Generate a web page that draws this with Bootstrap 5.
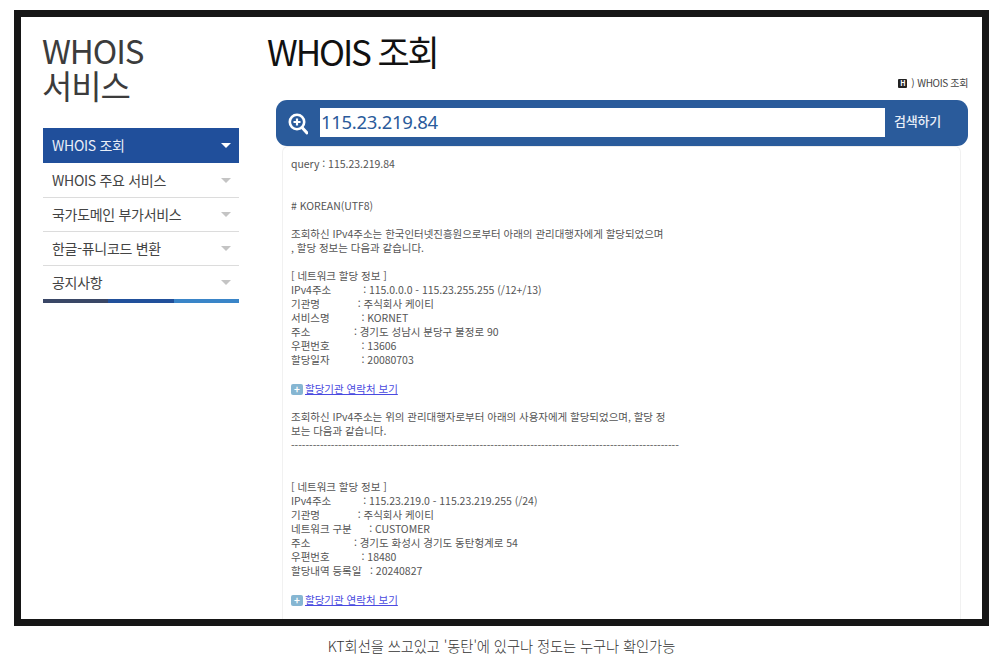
<!DOCTYPE html>
<html lang="ko">
<head>
<meta charset="UTF-8">
<meta name="viewport" content="width=device-width, initial-scale=1.0">
<title>WHOIS 조회</title>
<link href="https://cdn.jsdelivr.net/npm/bootstrap@5.3.0/dist/css/bootstrap.min.css" rel="stylesheet">
<style>
html, body { height: 670px; overflow: hidden; background: #fff; }
body { font-family: "Noto Sans CJK KR", "Liberation Sans", sans-serif; padding: 10px 4px 0 14px; }
.shot-frame { height: 616px; border: 7px solid #161616; overflow: hidden; padding: 0 14px 0 22px; gap: 28px; }
.side-col { width: 196px; flex: none; padding-top: 16px; }
.side-title { font-size: 33px; line-height: 35px; font-weight: 400; color: #3c3c3c; letter-spacing: -1.1px; margin: 0 0 25px -1px; height: 70px; }
.side-item { height: 34px; padding: 0 9px; font-size: 14px; font-weight: 400; color: #444; border-bottom: 1px solid #dcdcdc; letter-spacing: -.3px; }
.side-item.is-on { height: 35px; background: #204f9b; color: #e8eef7; border-bottom: 0; }
.side-item.is-on + .side-item { height: 35px; }
.side-item.is-last { height: 33px; border-bottom: 0; }
.tri { width: 0; height: 0; border-left: 5px solid transparent; border-right: 5px solid transparent; border-top: 5px solid #c4c4c4; margin-right: -1px; }
.is-on .tri { border-top-color: #fff; }
.side-bar { height: 4px; }
.side-bar div { flex: 1; }
.main-col { min-width: 0; }
.page-title { font-size: 35px; line-height: 44px; font-weight: 400; color: #111; letter-spacing: -2.1px; margin: 12px 0 0; }
.crumb { font-size: 10px; line-height: 14px; color: #444; margin-top: 3px; letter-spacing: -.35px; }
.crumb-h { width: 9px; height: 9px; background: #222; color: #fff; font-size: 7px; line-height: 9px; border-radius: 1px; font-weight: 700; }
.crumb-sep { margin: 0 3px 0 4px; }
.search-box { margin: 10px 0 0 9px; height: 46px; background: #2a5b9b; border-radius: 11px; padding: 8px 27px 0 12px; }
.search-ico { width: 20px; height: 24px; margin-right: 12px; }
.search-val { width: 565px; height: 29px; background: #fff; color: #2a5b9b; font-size: 18.5px; line-height: 28px; padding: 0 1px; letter-spacing: -.3px; font-weight: 400; font-family: "Noto Sans", sans-serif; }
.search-btn { color: #e8eef7; font-size: 13px; font-weight: 500; line-height: 26px; margin-left: 9px; letter-spacing: -.2px; }
.whois-panel { margin: 0 7px 0 15px; border: 1px solid #f1f1f1; border-top-color: #ececec; border-radius: 6px 6px 0 0; padding: 10px 8px 0; height: 480px; overflow: hidden; }
.whois-text { font-size: 10.5px; line-height: 14px; color: #555; white-space: pre-wrap; word-break: keep-all; width: 392px; letter-spacing: -.03px; }
.whois-link { font-size: 10.5px; line-height: 14px; color: #4a4ae0; text-decoration: underline; margin-top: 15px; }
.whois-link + .whois-text { margin-top: 14px; }
.plus-ico { width: 12px; height: 11px; background: #86b6d2; color: #fff; border-radius: 2px; font-size: 10px; line-height: 10px; font-weight: 700; margin-right: 2px; }
.cap-line { font-size: 14.3px; line-height: 20px; color: #333; margin-top: 10px; letter-spacing: -.1px; font-weight: 300; }
</style>
</head>
<body>
<div class="shot-frame d-flex">
  <div class="side-col">
    <h2 class="side-title">WHOIS<br>서비스</h2>
    <div class="side-item is-on d-flex align-items-center justify-content-between"><span>WHOIS 조회</span><i class="tri"></i></div>
    <div class="side-item d-flex align-items-center justify-content-between"><span>WHOIS 주요 서비스</span><i class="tri"></i></div>
    <div class="side-item d-flex align-items-center justify-content-between"><span>국가도메인 부가서비스</span><i class="tri"></i></div>
    <div class="side-item d-flex align-items-center justify-content-between"><span>한글-퓨니코드 변환</span><i class="tri"></i></div>
    <div class="side-item is-last d-flex align-items-center justify-content-between"><span>공지사항</span><i class="tri"></i></div>
    <div class="side-bar d-flex">
      <div style="background:#3a4766"></div>
      <div style="background:#21509b"></div>
      <div style="background:#3a85c8"></div>
    </div>
  </div>
  <div class="main-col flex-grow-1">
    <h1 class="page-title">WHOIS 조회</h1>
    <div class="crumb d-flex justify-content-end align-items-center"><span class="crumb-h d-inline-flex justify-content-center">H</span><span class="crumb-sep">)</span><span>WHOIS 조회</span></div>
    <div class="search-box d-flex align-items-start">
      <svg class="search-ico mt-1" viewBox="0 0 20 22" fill="none">
        <circle cx="9" cy="9" r="7.2" stroke="#fff" stroke-width="2.6"/>
        <path d="M14 14.5 19 20" stroke="#fff" stroke-width="3" stroke-linecap="round"/>
        <path d="M5.5 9h7M9 5.5v7" stroke="#fff" stroke-width="2.2"/>
      </svg>
      <div class="search-val">115.23.219.84</div>
      <div class="search-btn">검색하기</div>
    </div>
    <div class="whois-panel">
<div class="whois-text">query : 115.23.219.84


# KOREAN(UTF8)

조회하신 IPv4주소는 한국인터넷진흥원으로부터 아래의 관리대행자에게 할당되었으며
, 할당 정보는 다음과 같습니다.

[ 네트워크 할당 정보 ]
IPv4주소           : 115.0.0.0 - 115.23.255.255 (/12+/13)
기관명             : 주식회사 케이티
서비스명           : KORNET
주소               : 경기도 성남시 분당구 불정로 90
우편번호           : 13606
할당일자           : 20080703</div>
<div class="whois-link"><span class="plus-ico d-inline-flex justify-content-center">+</span>할당기관 연락처 보기</div>
<div class="whois-text">조회하신 IPv4주소는 위의 관리대행자로부터 아래의 사용자에게 할당되었으며, 할당 정
보는 다음과 같습니다.
-----------------------------------------------------------------------------------------------------------


[ 네트워크 할당 정보 ]
IPv4주소           : 115.23.219.0 - 115.23.219.255 (/24)
기관명             : 주식회사 케이티
네트워크 구분      : CUSTOMER
주소               : 경기도 화성시 경기도 동탄헝계로 54
우편번호           : 18480
할당내역 등록일   : 20240827</div>
<div class="whois-link"><span class="plus-ico d-inline-flex justify-content-center">+</span>할당기관 연락처 보기</div>
    </div>
  </div>
</div>
<div class="cap-line text-center">KT회선을 쓰고있고 '동탄'에 있구나 정도는 누구나 확인가능</div>
<script src="https://cdn.jsdelivr.net/npm/bootstrap@5.3.0/dist/js/bootstrap.bundle.min.js"></script>
</body>
</html>
